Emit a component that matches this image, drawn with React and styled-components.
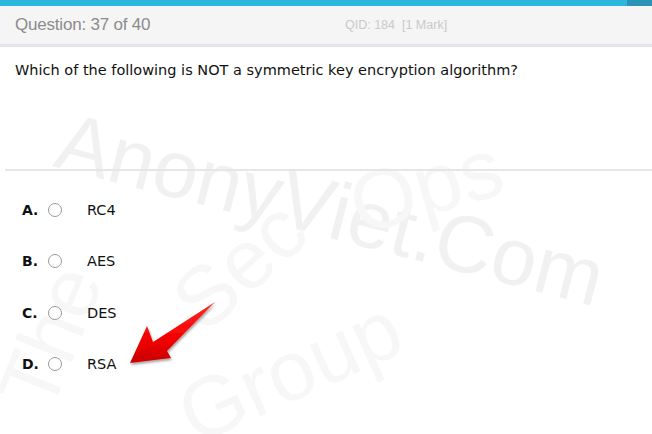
import styled, { createGlobalStyle } from "styled-components";

const GlobalStyle = createGlobalStyle`
  html, body {
    margin: 0;
    padding: 0;
    background: #ffffff;
  }
  body {
    font-family: "DejaVu Sans", Verdana, sans-serif;
  }
`;

const options = [
  { key: "A.", text: "RC4" },
  { key: "B.", text: "AES" },
  { key: "C.", text: "DES" },
  { key: "D.", text: "RSA" },
];

function Watermark() {
  return (
    <WatermarkLayer width="652" height="434" viewBox="0 0 652 434">
      <g fill="#f1f1f1" fontFamily="'Liberation Sans', Arial, sans-serif">
        <text x="52" y="166" fontSize="81" transform="rotate(14.5 52 166)">
          AnonyViet.Com
        </text>
      </g>
      <g fill="#f7f7f7" fontFamily="'Liberation Sans', Arial, sans-serif" fontSize="84">
        <text x="50" y="415" transform="rotate(-68 50 415)">The</text>
        <text x="205" y="335" transform="rotate(-42 205 335)">Sec</text>
        <text x="360" y="235" transform="rotate(-16 360 235)">Ops</text>
        <text x="195" y="445" transform="rotate(-24 195 445)">Group</text>
      </g>
    </WatermarkLayer>
  );
}

function Arrow() {
  return (
    <ArrowLayer width="652" height="434" viewBox="0 0 652 434">
      <defs>
        <linearGradient id="arrowFill" x1="0" y1="0" x2="0" y2="1">
          <stop offset="0" stopColor="#ff2a2a" />
          <stop offset="0.6" stopColor="#f40000" />
          <stop offset="1" stopColor="#c80000" />
        </linearGradient>
        <filter id="arrowShadow" x="-20%" y="-20%" width="140%" height="140%">
          <feDropShadow dx="1" dy="2" stdDeviation="1.2" floodColor="#000" floodOpacity="0.35" />
        </filter>
      </defs>
      <polygon
        points="130,363 147,326 153,342 215,302 167,351 171,358"
        fill="url(#arrowFill)"
        filter="url(#arrowShadow)"
      />
    </ArrowLayer>
  );
}

export default function App() {
  return (
    <Page>
      <GlobalStyle />
      <TopBar>
        <TopBarEnd />
      </TopBar>
      <Header>
        <QuestionCount>Question: 37 of 40</QuestionCount>
        <QuestionMeta>QID: 184&nbsp; [1 Mark]</QuestionMeta>
      </Header>
      <Body>
        <Watermark />
        <Content>
          <QuestionText>
            Which of the following is NOT a symmetric key encryption algorithm?
          </QuestionText>
          <Divider />
          <OptionList>
            {options.map((o) => (
              <OptionRow key={o.key}>
                <OptionKey>{o.key}</OptionKey>
                <Radio />
                <OptionText>{o.text}</OptionText>
              </OptionRow>
            ))}
          </OptionList>
        </Content>
        <Arrow />
      </Body>
    </Page>
  );
}

const Page = styled.div`
  width: 652px;
  height: 434px;
  overflow: hidden;
  display: flex;
  flex-direction: column;
  background: #ffffff;
`;

const TopBar = styled.div`
  display: flex;
  justify-content: flex-end;
  height: 6px;
  background: #2eb7dc;
`;

const TopBarEnd = styled.div`
  width: 25px;
  background: #2a94b6;
`;

const Header = styled.div`
  display: flex;
  align-items: center;
  height: 38px;
  padding-left: 15px;
  background: #f5f5f5;
  border-bottom: 3px solid #e2e6ea;
`;

const QuestionCount = styled.div`
  width: 330px;
  font-family: "Liberation Sans", Arial, sans-serif;
  font-size: 17px;
  color: #8c8c8c;
  letter-spacing: -0.2px;
`;

const QuestionMeta = styled.div`
  font-family: "Liberation Sans", Arial, sans-serif;
  font-size: 12.5px;
  color: #cacaca;
`;

const Body = styled.div`
  position: relative;
  flex: 1;
`;

const WatermarkLayer = styled.svg`
  position: absolute;
  left: 0;
  top: -47px;
  z-index: 0;
  pointer-events: none;
`;

const ArrowLayer = styled.svg`
  position: absolute;
  left: 0;
  top: -47px;
  z-index: 2;
  pointer-events: none;
`;

const Content = styled.div`
  position: relative;
  z-index: 1;
`;

const QuestionText = styled.div`
  height: 122px;
  padding: 13px 0 0 15px;
  box-sizing: border-box;
  font-size: 14.5px;
  line-height: 20px;
  color: #111111;
`;

const Divider = styled.div`
  margin-left: 5px;
  height: 2px;
  background: #e6e6e6;
`;

const OptionList = styled.div`
  display: flex;
  flex-direction: column;
  gap: 31.3px;
  padding: 29px 0 0 22px;
`;

const OptionRow = styled.div`
  display: flex;
  align-items: center;
  height: 20px;
`;

const OptionKey = styled.span`
  width: 26px;
  font-size: 14px;
  font-weight: bold;
  color: #111111;
`;

const Radio = styled.span`
  width: 12px;
  height: 12px;
  border: 1px solid #9a9a9a;
  border-radius: 50%;
  background: #ffffff;
`;

const OptionText = styled.span`
  margin-left: 25px;
  font-size: 14.5px;
  color: #111111;
`;
